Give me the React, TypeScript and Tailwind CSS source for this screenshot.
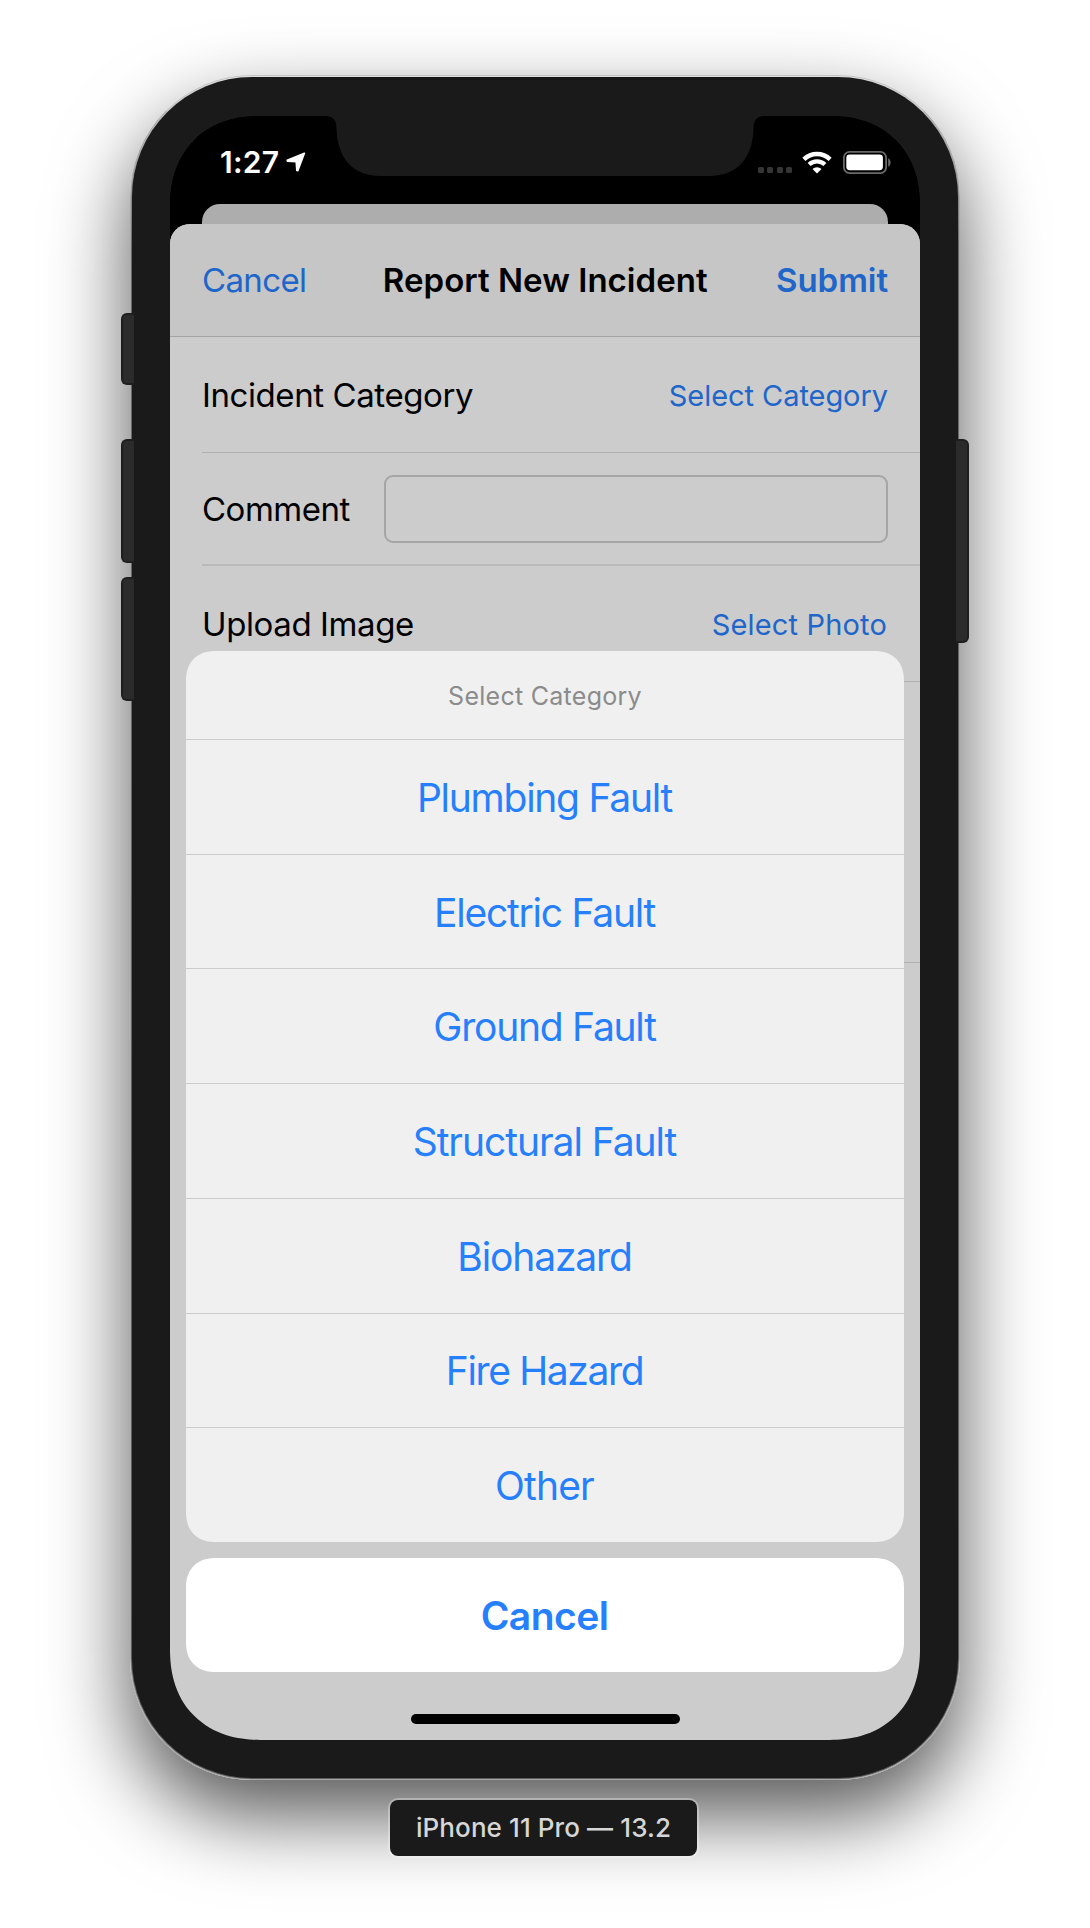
import React from 'react';

const categories = [
  { name: 'Plumbing Fault', spacing: 'tracking-[-1.25px]' },
  { name: 'Electric Fault', spacing: 'tracking-[-1.25px]' },
  { name: 'Ground Fault', spacing: 'tracking-[-1.25px]' },
  { name: 'Structural Fault', spacing: 'tracking-[-1.05px]' },
  { name: 'Biohazard', spacing: 'tracking-[-1.15px]' },
  { name: 'Fire Hazard', spacing: 'tracking-[-1.35px]' },
  { name: 'Other', spacing: 'tracking-[-0.84px]' },
];

function SideButton({ className }: { className: string }) {
  return <div className={`absolute w-[13px] border-y-2 border-[#1e1e1e] bg-[#2b2b2b] ${className}`} />;
}

function Notch() {
  return (
    <svg className="absolute left-0 top-0" width="750" height="61" viewBox="0 0 750 61">
      <path
        d="M155 0 C163 0 166.5 4 166.5 12 C167 40 181 60 211 60 H539 C569 60 583 40 583.5 12 C583.5 4 587 0 595 0 Z"
        fill="#1a1a1a"
      />
    </svg>
  );
}

function LocationArrow() {
  return (
    <svg width="20" height="20" viewBox="0 0 20 20">
      <path
        d="M18.4 1.2 L1.2 8.3 L1.4 9.2 L10.2 9.8 L10.8 18.5 L11.8 18.7 Z"
        fill="#fff"
        stroke="#fff"
        strokeWidth="1.6"
        strokeLinejoin="round"
      />
    </svg>
  );
}

function Wifi() {
  return (
    <svg width="30" height="23" viewBox="0 0 30 23">
      <path d="M1.9 8.3 A18.8 18.8 0 0 1 28.1 8.3" fill="none" stroke="#fff" strokeWidth="4.4" />
      <path d="M7.1 13.6 A11.4 11.4 0 0 1 22.9 13.6" fill="none" stroke="#fff" strokeWidth="4.2" />
      <path d="M10.5 18 A6.4 6.4 0 0 1 19.5 18 L15 22.6 Z" fill="#fff" />
    </svg>
  );
}

function Battery() {
  return (
    <svg width="48" height="23" viewBox="0 0 48 23">
      <rect x="0.9" y="0.9" width="42.2" height="21.2" rx="5.6" fill="none" stroke="#696969" strokeWidth="1.8" />
      <rect x="3.3" y="3.6" width="36.6" height="15.6" rx="3.4" fill="#fff" />
      <path d="M45.2 7.3 C48.4 8.6 48.4 14.4 45.2 15.7 Z" fill="#696969" />
    </svg>
  );
}

function StatusBar() {
  return (
    <div className="relative h-[88px] bg-black">
      <Notch />
      <div className="relative flex h-[92px] items-center justify-between pl-[50px] pr-[29px]">
        <div className="flex items-center gap-[7px]">
          <span className="text-[30px] font-semibold tracking-[0.3px] text-white">1:27</span>
          <LocationArrow />
        </div>
        <div className="flex items-center gap-[11px]">
          <div className="-mr-[1px] mt-[16px] flex gap-[3.4px]">
            {[0, 1, 2, 3].map((dot) => (
              <span key={dot} className="size-[6px] rounded-[1.5px] bg-[#353535]" />
            ))}
          </div>
          <Wifi />
          <Battery />
        </div>
      </div>
    </div>
  );
}

function IncidentForm() {
  return (
    <div className="text-[33px] text-black">
      <header className="flex h-[113px] items-center justify-between border-b border-[#a5a5a5] bg-[#c6c6c6] pl-[32px] pr-[32px]">
        <span className="tracking-[-0.64px] text-[#2066ca]">Cancel</span>
        <span className="ml-[8px] font-semibold tracking-[0.03px]">Report New Incident</span>
        <span className="font-semibold tracking-[-0.05px] text-[#2066ca]">Submit</span>
      </header>
      <div className="ml-8 flex h-[116px] items-center justify-between border-b border-[#b0b0b0] pr-[32px] pt-px">
        <span className="tracking-[-0.41px]">Incident Category</span>
        <span className="text-[29px] tracking-[-0.06px] text-[#2066ca]">Select Category</span>
      </div>
      <div className="ml-8 flex h-[113px] items-center border-b-2 border-[#bababa] pr-8">
        <span className="w-[182px] pt-[2px] tracking-[-0.5px]">Comment</span>
        <div className="h-[68px] flex-1 rounded-[9px] border-2 border-[#a5a5a5]" />
      </div>
      <div className="ml-8 flex h-[116px] items-center justify-between border-b border-[#b0b0b0] pr-[33px] pt-[2px]">
        <span className="tracking-[-0.4px]">Upload Image</span>
        <span className="text-[29px] tracking-[0.16px] text-[#2066ca]">Select Photo</span>
      </div>
      <div className="ml-8 h-[281px] border-b border-[#b0b0b0]" />
    </div>
  );
}

function ActionSheet() {
  return (
    <div className="absolute inset-x-4 bottom-[68px] top-[535px] flex flex-col gap-4 text-[39px] text-[#267ffb]">
      <div className="flex flex-1 flex-col overflow-hidden rounded-[30px] bg-[#f0f0f0] [corner-shape:superellipse(1.2)]">
        <div className="flex h-[88px] items-center justify-center pt-[3px] text-[25px] tracking-[0.27px] text-[#8b8b8b]">
          Select Category
        </div>
        {categories.map((c) => (
          <div key={c.name} className={`flex flex-1 items-center justify-center border-t border-[#cbcbcb] pr-px pt-px ${c.spacing}`}>
            {c.name}
          </div>
        ))}
      </div>
      <div className="flex h-[114px] items-center justify-center rounded-[30px] bg-white pr-px font-semibold tracking-[-0.55px] [corner-shape:superellipse(1.2)]">
        Cancel
      </div>
    </div>
  );
}

export default function App() {
  return (
    <div className="flex h-[1928px] w-[1090px] flex-col items-center overflow-hidden bg-white pt-[75px] font-[Inter,sans-serif] leading-none whitespace-nowrap">
      <div className="relative h-[1705px] w-[830px] shrink-0 rounded-[122px] border border-t-[#c4c4c4] border-[#a8a8a8] bg-linear-to-b from-[#e0e0e0] from-0% via-[#6a6a6a] via-10% to-[#5c5c5c] p-px shadow-[0_36px_80px_rgba(0,0,0,0.66)]">
        <div className="h-full rounded-[120px] bg-[#1a1a1a] px-[38px] pb-[38px] pt-[39px]">
          <div className="relative h-full overflow-hidden rounded-[90px] bg-black [corner-shape:superellipse(1.15)]">
            <StatusBar />
            <div className="mx-8 h-5 rounded-t-[18px] bg-[#adadad]" />
            <div className="h-[1516px] rounded-t-[20px] bg-[#cccccc] overflow-hidden">
              <IncidentForm />
            </div>
            <ActionSheet />
            <div className="absolute bottom-4 left-[241px] h-[10px] w-[269px] rounded-full bg-black" />
          </div>
        </div>
        <SideButton className="left-[-10px] top-[237px] h-[72px] rounded-l-[6px] border-l-2" />
        <SideButton className="left-[-10px] top-[363px] h-[124px] rounded-l-[6px] border-l-2" />
        <SideButton className="left-[-10px] top-[501px] h-[124px] rounded-l-[6px] border-l-2" />
        <SideButton className="right-[-10px] top-[363px] h-[204px] rounded-r-[6px] border-r-2" />
      </div>
      <div className="relative mt-5 mr-[3px] flex h-14 w-[307px] items-center justify-center rounded-[8px] bg-[#1a1a1a] text-[26px] font-medium tracking-[0.1px] text-[#d6d6d6] ring-2 ring-white/30">
        iPhone 11 Pro — 13.2
      </div>
    </div>
  );
}
